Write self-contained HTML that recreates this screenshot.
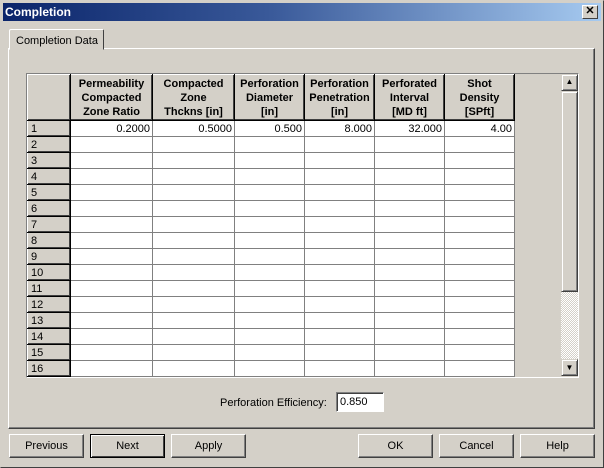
<!DOCTYPE html>
<html><head><meta charset="utf-8"><style>
*{box-sizing:border-box;margin:0;padding:0}
body{width:604px;height:468px;background:#d4d0c8;font-family:"Liberation Sans",Arial,sans-serif;font-size:11px;color:#000;position:relative;overflow:hidden}
.abs{position:absolute}
#win{left:0;top:0;width:604px;height:468px;border:1px solid #d4d0c8;border-right-color:#404040;border-bottom-color:#404040}
#title{left:3px;top:3px;width:598px;height:18px;background:linear-gradient(90deg,#0a246a 0%,#3a5a9a 45%,#a6caf0 100%);color:#fff;font-weight:bold;font-size:12px;line-height:18px;padding-left:2px}
#close{left:582px;top:5px;width:16px;height:14px;background:#d4d0c8;border:1px solid;border-color:#fff #404040 #404040 #fff;font-size:11px;line-height:11px;text-align:center;font-weight:bold;color:#000}
#tab{left:9px;top:29px;width:95px;height:21px;border:1px solid;border-color:#fff #404040 transparent #fff;border-radius:2px 2px 0 0;background:#d4d0c8;padding:5px 0 0 6px;z-index:2}
#panel{left:8px;top:48px;width:587px;height:381px;border:1px solid;border-color:#fff #404040 #404040 #fff;box-shadow:inset -1px -1px #808080}
#grid{left:26px;top:73px;width:553px;height:305px;border:1px solid;border-color:#808080 #fff #fff #808080;background:#d4d0c8}
table{position:absolute;left:27px;top:74px;border-collapse:collapse}
td{border:1px solid #808080;height:16px;padding:0 2px;background:#fff;text-align:right;font-size:11px;line-height:14px}
td.h{background:#d4d0c8;text-align:left;border:1px solid #000;border-top-color:#fff;border-left-color:#fff;box-shadow:inset -1px -1px #404040;padding-left:3px}
th{background:#d4d0c8;font-weight:bold;font-size:11px;line-height:14px;height:46px;border:1px solid #000;border-top-color:#fff;border-left-color:#fff;box-shadow:inset -1px -1px #404040;text-align:center;padding:0}
.btn{height:24px;width:75px;top:434px;border:1px solid;border-color:#fff #404040 #404040 #fff;box-shadow:inset -1px -1px #808080;text-align:center;line-height:22px;font-size:11px}
.sb{border:1px solid;border-color:#d4d0c8 #404040 #404040 #d4d0c8;box-shadow:inset 1px 1px #fff,inset -1px -1px #808080;background:#d4d0c8}
</style></head><body>
<div id="win" class="abs"></div>
<div id="title" class="abs">Completion</div>
<div id="close" class="abs">✕</div>
<div id="panel" class="abs"></div>
<div id="tab" class="abs">Completion Data</div>
<div id="grid" class="abs"></div>
<table>
<tr><th style="width:43px"></th><th style="width:82px">Permeability<br>Compacted<br>Zone Ratio</th><th style="width:82px">Compacted<br>Zone<br>Thckns [in]</th><th style="width:70px">Perforation<br>Diameter<br>[in]</th><th style="width:70px">Perforation<br>Penetration<br>[in]</th><th style="width:70px">Perforated<br>Interval<br>[MD ft]</th><th style="width:70px">Shot<br>Density<br>[SPft]</th></tr>
<tr><td class="h">1</td><td>0.2000</td><td>0.5000</td><td>0.500</td><td>8.000</td><td>32.000</td><td>4.00</td></tr>
<tr><td class="h">2</td><td></td><td></td><td></td><td></td><td></td><td></td></tr>
<tr><td class="h">3</td><td></td><td></td><td></td><td></td><td></td><td></td></tr>
<tr><td class="h">4</td><td></td><td></td><td></td><td></td><td></td><td></td></tr>
<tr><td class="h">5</td><td></td><td></td><td></td><td></td><td></td><td></td></tr>
<tr><td class="h">6</td><td></td><td></td><td></td><td></td><td></td><td></td></tr>
<tr><td class="h">7</td><td></td><td></td><td></td><td></td><td></td><td></td></tr>
<tr><td class="h">8</td><td></td><td></td><td></td><td></td><td></td><td></td></tr>
<tr><td class="h">9</td><td></td><td></td><td></td><td></td><td></td><td></td></tr>
<tr><td class="h">10</td><td></td><td></td><td></td><td></td><td></td><td></td></tr>
<tr><td class="h">11</td><td></td><td></td><td></td><td></td><td></td><td></td></tr>
<tr><td class="h">12</td><td></td><td></td><td></td><td></td><td></td><td></td></tr>
<tr><td class="h">13</td><td></td><td></td><td></td><td></td><td></td><td></td></tr>
<tr><td class="h">14</td><td></td><td></td><td></td><td></td><td></td><td></td></tr>
<tr><td class="h">15</td><td></td><td></td><td></td><td></td><td></td><td></td></tr>
<tr><td class="h">16</td><td></td><td></td><td></td><td></td><td></td><td></td></tr>
</table>
<div class="abs" style="left:561px;top:74px;width:17px;height:302px;background:repeating-conic-gradient(#fff 0 25%,#d4d0c8 0 50%) 0 0/2px 2px"></div>
<div class="abs sb" style="left:561px;top:74px;width:17px;height:17px;font-size:8px;text-align:center;line-height:14px">▲</div>
<div class="abs sb" style="left:561px;top:91px;width:17px;height:201px"></div>
<div class="abs sb" style="left:561px;top:359px;width:17px;height:17px;font-size:8px;text-align:center;line-height:15px">▼</div>
<div class="abs" style="left:220px;top:397px;font-size:11px">Perforation Efficiency:</div>
<div class="abs" style="left:336px;top:392px;width:48px;height:20px;background:#fff;border:1px solid;border-color:#808080 #fff #fff #808080;box-shadow:inset 1px 1px #404040;padding:3px 0 0 3px">0.850</div>
<div class="abs btn" style="left:9px">Previous</div>
<div class="abs btn" style="left:90px;border:1px solid #000;box-shadow:inset 1px 1px #fff,inset -1px -1px #404040">Next</div>
<div class="abs btn" style="left:171px">Apply</div>
<div class="abs btn" style="left:358px">OK</div>
<div class="abs btn" style="left:439px">Cancel</div>
<div class="abs btn" style="left:520px">Help</div>
</body></html>
